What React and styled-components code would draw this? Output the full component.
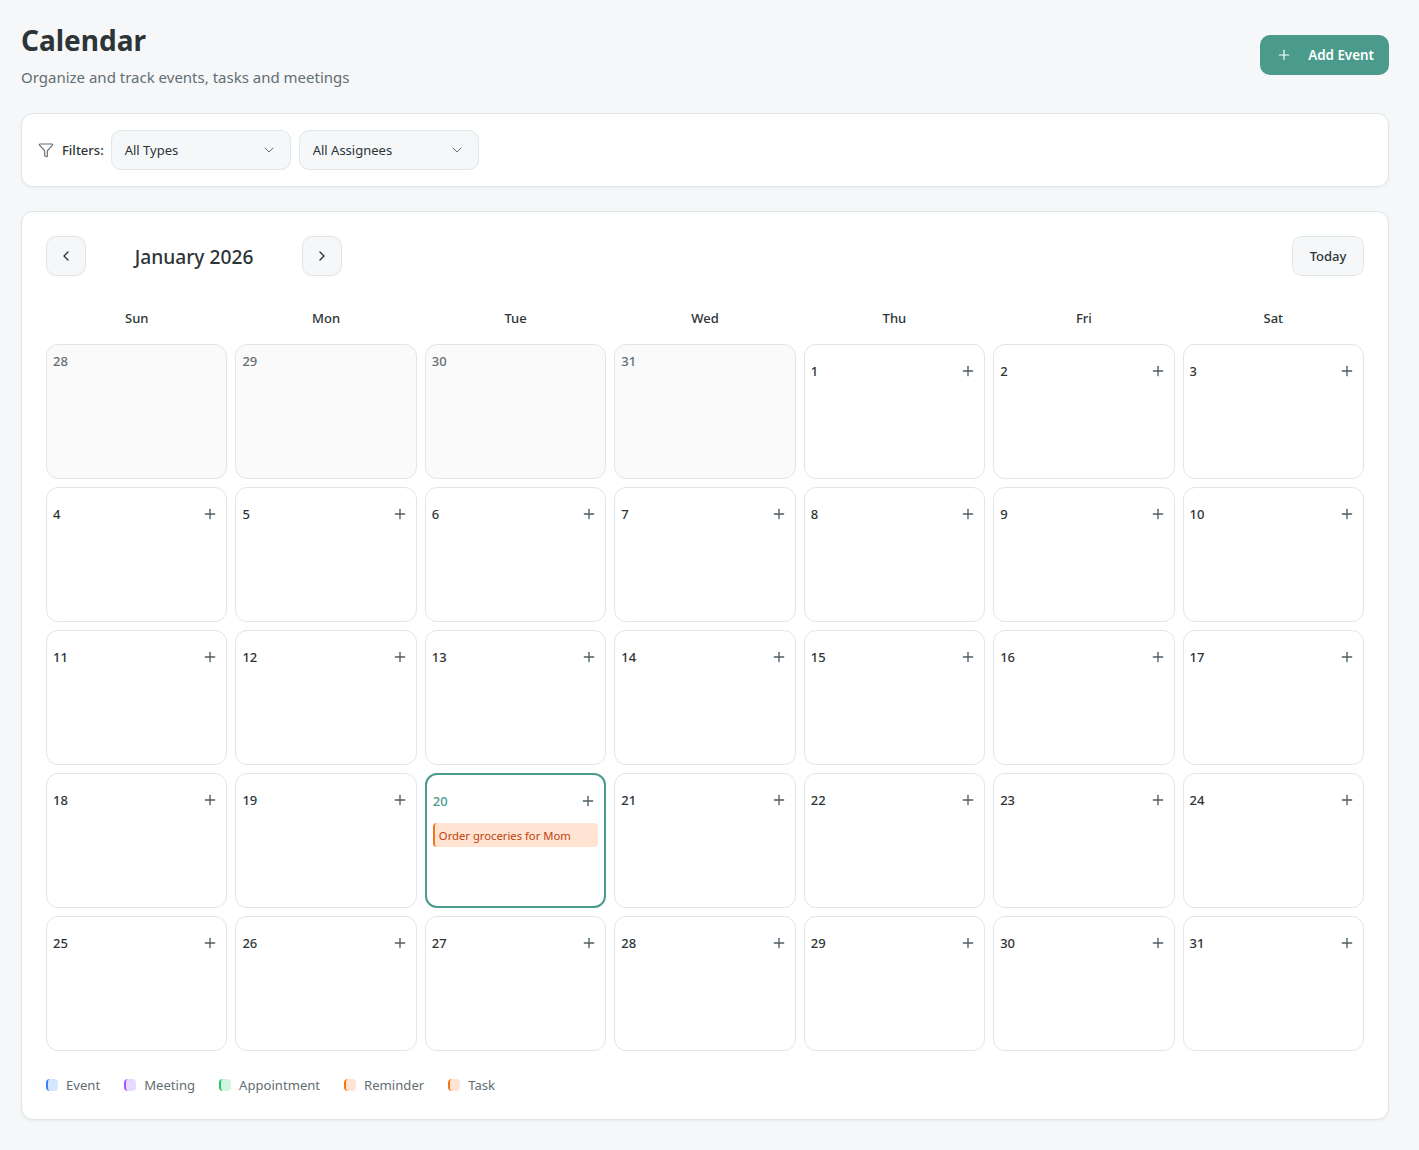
import React from "react";
import styled, { createGlobalStyle } from "styled-components";
import { ChevronDown, ChevronLeft, ChevronRight, Filter, Plus } from "lucide-react";

const GlobalStyle = createGlobalStyle`
  * {
    box-sizing: border-box;
  }
  body {
    margin: 0;
    background: #f5f7f9;
    font-family: "Noto Sans", "Open Sans", sans-serif;
    color: #2d3436;
  }
`;

const Page = styled.div`
  height: 1150px;
  padding: 20px 30px 30px 21px;
  display: flex;
  flex-direction: column;
`;

const Header = styled.header`
  display: flex;
  justify-content: space-between;
  align-items: flex-start;
  height: 93px;
`;

const Title = styled.h1`
  margin: 0;
  font-size: 28px;
  line-height: 41px;
  font-weight: 700;
  color: #2d3436;
`;

const Subtitle = styled.p`
  margin: 5px 0 0;
  font-size: 15px;
  line-height: 22px;
  color: #636e72;
`;

const AddButton = styled.button`
  margin-top: 15px;
  width: 129px;
  height: 40px;
  padding: 0 15px 0 16px;
  display: flex;
  align-items: center;
  justify-content: space-between;
  border: 0;
  border-radius: 10px;
  background: #4a9b8c;
  color: #fff;
  font: 600 13.4px "Noto Sans", sans-serif;
`;

const Card = styled.section`
  background: #fff;
  border: 1px solid #dfe6e9;
  border-radius: 12px;
  box-shadow: 0 1px 3px rgba(0, 0, 0, 0.05);
`;

const FilterBar = styled(Card)`
  height: 74px;
  padding: 0 16px;
  display: flex;
  align-items: center;
  gap: 8px;
  margin-bottom: 24px;
`;

const FilterLabel = styled.span`
  display: flex;
  align-items: center;
  gap: 8px;
  margin-right: -1px;
  font-size: 13px;
  font-weight: 500;
  color: #2d3436;
  svg {
    color: #636e72;
  }
`;

const Select = styled.div`
  width: 180px;
  height: 40px;
  padding: 0 13px;
  display: flex;
  align-items: center;
  justify-content: space-between;
  background: #f5f7f9;
  border: 1px solid #dfe6e9;
  border-radius: 10px;
  font-size: 13px;
  color: #2d3436;
  svg {
    color: #636e72;
  }
`;

const CalendarCard = styled(Card)`
  height: 909px;
  padding: 24px;
`;

const Toolbar = styled.div`
  display: flex;
  align-items: center;
  height: 40px;
  margin-bottom: 24px;
`;

const IconButton = styled.button`
  width: 40px;
  height: 40px;
  padding: 0;
  display: grid;
  place-items: center;
  background: #f5f7f9;
  border: 1px solid #dfe6e9;
  border-radius: 10px;
  color: #2d3436;
`;

const Month = styled.h2`
  margin: 0;
  width: 216px;
  text-align: center;
  font-size: 19.2px;
  font-weight: 500;
  color: #2d3436;
`;

const TodayButton = styled.button`
  margin-left: auto;
  width: 72px;
  height: 40px;
  background: #f5f7f9;
  border: 1px solid #dfe6e9;
  border-radius: 10px;
  color: #2d3436;
  font: 500 13px "Noto Sans", sans-serif;
`;

const Grid = styled.div`
  display: grid;
  grid-template-columns: repeat(7, 1fr);
  grid-auto-rows: 135px;
  column-gap: 8px;
  row-gap: 8px;
`;

const WeekDays = styled(Grid)`
  grid-auto-rows: 36px;
  margin-bottom: 8px;
`;

const WeekDay = styled.div`
  text-align: center;
  font-size: 13px;
  font-weight: 500;
  line-height: 36px;
  color: #2d3436;
`;

const Cell = styled.div`
  padding: ${p => (p.$today ? "6px" : "7px 7px 7px 6px")};
  background: ${p => (p.$muted ? "#fafafa" : "#fff")};
  border: ${p => (p.$today ? "2px solid #4a9b8c" : "1px solid #dfe6e9")};
  border-radius: 12px;
`;

const CellHead = styled.div`
  display: flex;
  justify-content: space-between;
  align-items: center;
  height: 24px;
  margin-top: ${p => (p.$muted ? "-3px" : p.$today ? "8px" : "7px")};
  margin-bottom: 4px;
`;

const DayNumber = styled.span`
  font-size: 13px;
  font-weight: 500;
  color: ${p => (p.$today ? "#4a9b8c" : p.$muted ? "#636e72" : "#2d3436")};
`;

const CellAdd = styled.span`
  display: flex;
  margin-right: ${p => (p.$today ? "2px" : "1px")};
  color: #4f5b62;
`;

const EventChip = styled.div`
  margin-top: 10px;
  height: 24px;
  padding: 0 4px;
  display: flex;
  align-items: center;
  background: #ffe3d3;
  border-left: 2px solid #f97316;
  border-radius: 4px;
  font-size: 11.25px;
  color: #c2410c;
  white-space: nowrap;
`;

const Legend = styled.div`
  display: flex;
  align-items: center;
  gap: 24px;
  margin-top: 24px;
  height: 20px;
`;

const LegendItem = styled.span`
  display: flex;
  align-items: center;
  gap: 8px;
  font-size: 13.1px;
  color: #636e72;
`;

const Swatch = styled.i`
  width: 12px;
  height: 12px;
  border-radius: 4px;
  background: ${p => p.$bg};
  border-left: 2px solid ${p => p.$line};
`;

const weekDays = ["Sun", "Mon", "Tue", "Wed", "Thu", "Fri", "Sat"];
const legend = [
  { name: "Event", bg: "#d6e6ff", line: "#3b82f6" },
  { name: "Meeting", bg: "#ead9fe", line: "#a855f7" },
  { name: "Appointment", bg: "#d1f5df", line: "#22c55e" },
  { name: "Reminder", bg: "#ffe3d3", line: "#f97316" },
  { name: "Task", bg: "#ffe3d3", line: "#f97316" },
];

const days = [
  ...[28, 29, 30, 31].map(day => ({ day, muted: true })),
  ...Array.from({ length: 31 }, (_, i) => ({ day: i + 1 })),
];

export default function App() {
  return (
    <>
      <GlobalStyle />
      <Page>
        <Header>
          <div>
            <Title>Calendar</Title>
            <Subtitle>Organize and track events, tasks and meetings</Subtitle>
          </div>
          <AddButton>
            <Plus size={16} strokeWidth={1.75} />
            Add Event
          </AddButton>
        </Header>
        <FilterBar>
          <FilterLabel>
            <Filter size={16} strokeWidth={1.75} />
            Filters:
          </FilterLabel>
          <Select>
            All Types
            <ChevronDown size={16} strokeWidth={1.5} />
          </Select>
          <Select>
            All Assignees
            <ChevronDown size={16} strokeWidth={1.5} />
          </Select>
        </FilterBar>
        <CalendarCard>
          <Toolbar>
            <IconButton>
              <ChevronLeft size={16} />
            </IconButton>
            <Month>January 2026</Month>
            <IconButton>
              <ChevronRight size={16} />
            </IconButton>
            <TodayButton>Today</TodayButton>
          </Toolbar>
          <WeekDays>
            {weekDays.map(name => (
              <WeekDay key={name}>{name}</WeekDay>
            ))}
          </WeekDays>
          <Grid>
            {days.map(({ day, muted }) => {
              const today = !muted && day === 20;
              return (
                <Cell key={`${day}-${muted}`} $muted={muted} $today={today}>
                  <CellHead $muted={muted} $today={today}>
                    <DayNumber $muted={muted} $today={today}>
                      {day}
                    </DayNumber>
                    {!muted && (
                      <CellAdd $today={today}>
                        <Plus size={16} />
                      </CellAdd>
                    )}
                  </CellHead>
                  {today && <EventChip>Order groceries for Mom</EventChip>}
                </Cell>
              );
            })}
          </Grid>
          <Legend>
            {legend.map(item => (
              <LegendItem key={item.name}>
                <Swatch $bg={item.bg} $line={item.line} />
                {item.name}
              </LegendItem>
            ))}
          </Legend>
        </CalendarCard>
      </Page>
    </>
  );
}
